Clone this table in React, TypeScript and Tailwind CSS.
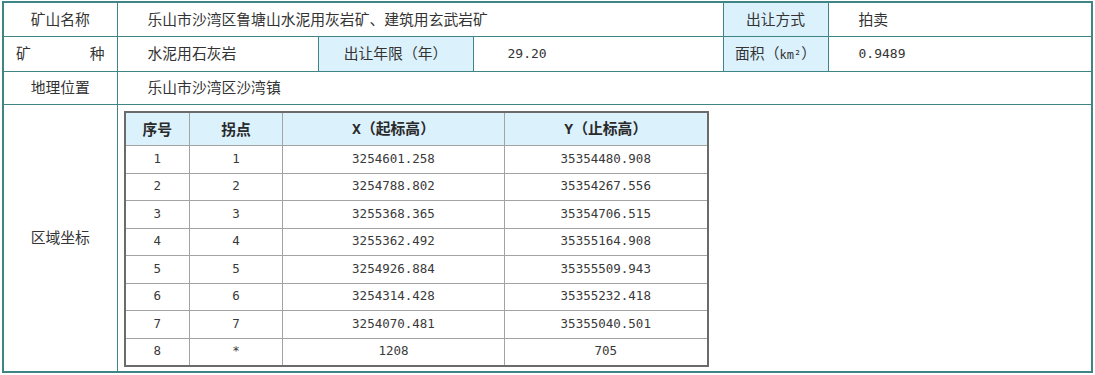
import React from 'react';

const points = [
  ['1', '1', '3254601.258', '35354480.908'],
  ['2', '2', '3254788.802', '35354267.556'],
  ['3', '3', '3255368.365', '35354706.515'],
  ['4', '4', '3255362.492', '35355164.908'],
  ['5', '5', '3254926.884', '35355509.943'],
  ['6', '6', '3254314.428', '35355232.418'],
  ['7', '7', '3254070.481', '35355040.501'],
  ['8', '*', '1208', '705'],
];

const cjk = { fontFamily: '"Noto Sans CJK SC", "Noto Sans", sans-serif' };
const mono = { fontFamily: '"DejaVu Sans Mono", "Noto Sans CJK SC", monospace' };

const td = 'border border-[#3f8585] p-0 align-middle';
const label = `${td} text-center`;
const blue = `${td} text-center bg-[#dbf1fc]`;
const value = `${td} pl-[30px] text-left`;

export default function App() {
  return (
    <div className="w-[1095px] h-[375px] bg-white pt-[1px] pl-[2px] text-[#333] text-[14.8px]" style={cjk}>
      <table className="w-[1091px] table-fixed border-collapse border-2 border-[#3f8585]">
        <colgroup>
          <col className="w-[114px]" />
          <col className="w-[201px]" />
          <col className="w-[155px]" />
          <col className="w-[250px]" />
          <col className="w-[105px]" />
          <col />
        </colgroup>
        <tbody>
          <tr className="h-[34px]">
            <td className={label}>矿山名称</td>
            <td className={value} colSpan={3}>乐山市沙湾区鲁塘山水泥用灰岩矿、建筑用玄武岩矿</td>
            <td className={blue}>出让方式</td>
            <td className={value}>拍卖</td>
          </tr>
          <tr className="h-[35px]">
            <td className={td}>
              <div className="flex justify-between px-[12px]">
                <span>矿</span>
                <span>种</span>
              </div>
            </td>
            <td className={value}>水泥用石灰岩</td>
            <td className={blue}>出让年限（年）</td>
            <td className={`${value} pl-[34px] text-[13px]`} style={mono}>29.20</td>
            <td className={blue}>
              面积（<span className="text-[12px]" style={mono}>km²</span>）
            </td>
            <td className={`${value} text-[13px]`} style={mono}>0.9489</td>
          </tr>
          <tr className="h-[33px]">
            <td className={label}>地理位置</td>
            <td className={value} colSpan={5}>乐山市沙湾区沙湾镇</td>
          </tr>
          <tr className="h-[266px]">
            <td className={label}>区域坐标</td>
            <td className={`${td} pl-[6px] pt-[6px] pb-[4px] align-top`} colSpan={5}>
              <table className="w-[585px] table-fixed border-collapse border-2 border-[#6b6b6b] text-center">
                <colgroup>
                  <col className="w-[65px]" />
                  <col className="w-[93px]" />
                  <col className="w-[222px]" />
                  <col />
                </colgroup>
                <thead>
                  <tr className="h-[34px] bg-[#dbf1fc] font-bold text-[#2a2a2a]">
                    <th className="border border-[#a3a3a3] p-0">序号</th>
                    <th className="border border-[#a3a3a3] p-0">拐点</th>
                    <th className="border border-[#a3a3a3] p-0">
                      <span style={mono}>X</span>（起标高）
                    </th>
                    <th className="border border-[#a3a3a3] p-0">
                      <span style={mono}>Y</span>（止标高）
                    </th>
                  </tr>
                </thead>
                <tbody className="text-[12.5px] text-[#3a3a3a]" style={mono}>
                  {points.map(p => (
                    <tr key={p[0]} className="h-[27.5px]">
                      {p.map((c, i) => (
                        <td key={i} className="border border-[#a3a3a3] p-0">{c}</td>
                      ))}
                    </tr>
                  ))}
                </tbody>
              </table>
            </td>
          </tr>
        </tbody>
      </table>
    </div>
  );
}
